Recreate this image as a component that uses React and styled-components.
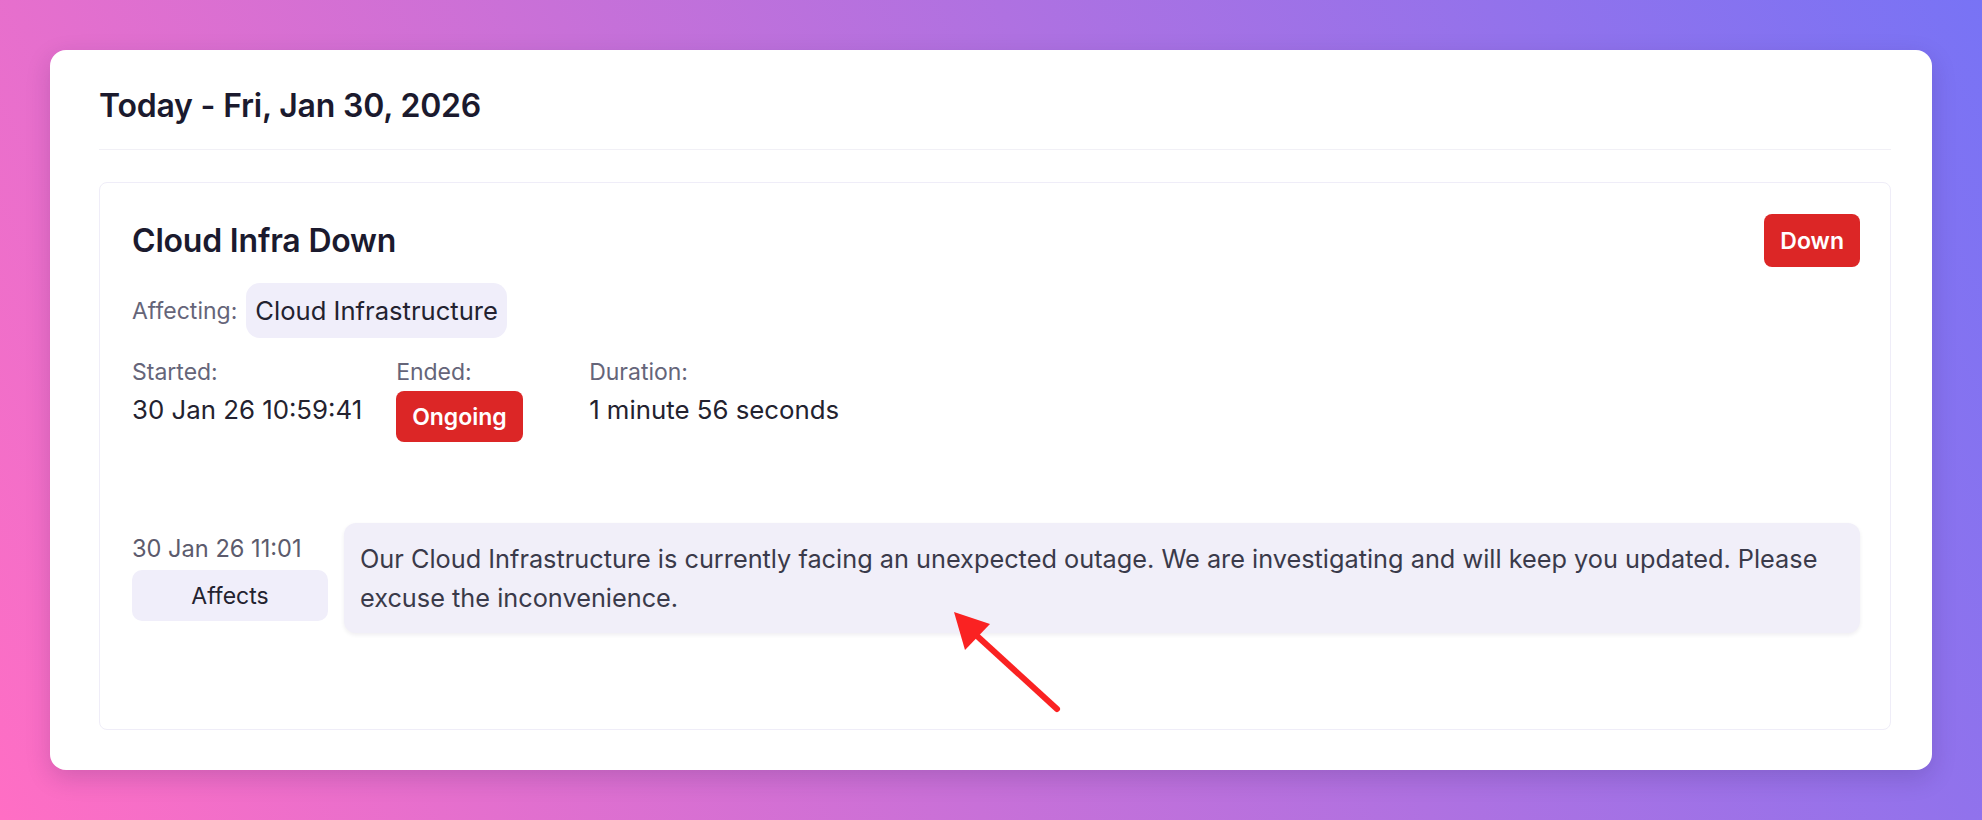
import React from "react";
import styled, { createGlobalStyle } from "styled-components";

const GlobalStyle = createGlobalStyle`
  html, body {
    margin: 0;
    padding: 0;
    overflow: hidden;
  }
  body {
    font-family: Inter, "Noto Sans", "Liberation Sans", sans-serif;
    -webkit-font-smoothing: antialiased;
  }
  * { box-sizing: border-box; }
`;

const Page = styled.div`
  position: relative;
  width: 1982px;
  height: 820px;
  padding: 50px;
  display: flex;
  flex-direction: column;
  background: linear-gradient(62deg, #ff6ec4 0%, #7873f5 100%);
`;

const Panel = styled.section`
  flex: 1;
  background: #ffffff;
  border-radius: 16px;
  padding: 36px 41px 39px 49px;
  box-shadow: 0 8px 24px rgba(40, 20, 80, 0.18);
`;

const DayTitle = styled.h2`
  margin: 0 0 32px;
  padding-bottom: 24px;
  border-bottom: 1px solid #f1f0f6;
  font-size: 32px;
  line-height: 39px;
  font-weight: 600;
  color: #1b1a2e;
  letter-spacing: -0.2px;
`;

const IncidentCard = styled.article`
  border: 1px solid #efedf8;
  border-radius: 8px;
  padding: 31px 30px 96px 32px;
`;

const Header = styled.div`
  display: flex;
  align-items: center;
  justify-content: space-between;
`;

const IncidentTitle = styled.h3`
  margin: 0;
  font-size: 32px;
  line-height: 39px;
  font-weight: 600;
  color: #1b1a2e;
  letter-spacing: -0.2px;
`;

const StatusBadge = styled.span`
  display: inline-flex;
  align-items: center;
  justify-content: center;
  align-self: ${(p) => (p.$inline ? "flex-start" : "auto")};
  height: ${(p) => p.$height}px;
  padding: 0 16px;
  border-radius: 8px;
  background: #dc2626;
  color: #ffffff;
  font-size: 23px;
  font-weight: 600;
`;

const AffectingRow = styled.div`
  margin-top: 16px;
  display: flex;
  align-items: center;
  gap: 9px;
`;

const Label = styled.span`
  font-size: 23px;
  line-height: 28px;
  color: #656579;
`;

const ComponentPill = styled.span`
  display: inline-flex;
  align-items: center;
  height: 55px;
  padding: 0 9px;
  border-radius: 14px;
  background: #f0eefa;
  color: #23222f;
  font-size: 25.6px;
`;

const Times = styled.div`
  margin-top: 20px;
  display: flex;
  gap: 34px;
`;

const TimeCol = styled.div`
  display: flex;
  flex-direction: column;
  gap: 5px;
  min-width: ${(p) => p.$minWidth || 0}px;
`;

const Value = styled.span`
  font-size: 25.8px;
  line-height: 37px;
  color: #23222f;
`;

const UpdateRow = styled.div`
  margin-top: 81px;
  display: flex;
  align-items: center;
  gap: 16px;
`;

const UpdateMeta = styled.div`
  width: 196px;
  flex: none;
  display: flex;
  flex-direction: column;
  gap: 7px;
`;

const UpdateDate = styled.span`
  font-size: 23.6px;
  line-height: 28px;
  color: #5c5b6d;
`;

const UpdateTag = styled.span`
  display: flex;
  align-items: center;
  justify-content: center;
  height: 51px;
  border-radius: 10px;
  background: #f0eefa;
  color: #23222f;
  font-size: 23px;
`;

const UpdateMessage = styled.p`
  flex: 1;
  margin: 0;
  padding: 16px;
  border-radius: 12px;
  background: #f1eff9;
  box-shadow: 0 2px 4px rgba(30, 20, 60, 0.07);
  font-size: 25.3px;
  line-height: 39px;
  color: #3a3a4a;
`;

const ArrowLayer = styled.svg`
  position: absolute;
  left: 0;
  top: 0;
  pointer-events: none;
`;

export default function App() {
  return (
    <>
      <GlobalStyle />
      <Page>
        <Panel>
          <DayTitle>Today - Fri, Jan 30, 2026</DayTitle>
          <IncidentCard>
            <Header>
              <IncidentTitle>Cloud Infra Down</IncidentTitle>
              <StatusBadge $height={53}>Down</StatusBadge>
            </Header>
            <AffectingRow>
              <Label>Affecting:</Label>
              <ComponentPill>Cloud Infrastructure</ComponentPill>
            </AffectingRow>
            <Times>
              <TimeCol>
                <Label>Started:</Label>
                <Value>30 Jan 26 10:59:41</Value>
              </TimeCol>
              <TimeCol $minWidth={159}>
                <Label>Ended:</Label>
                <StatusBadge $height={51} $inline>
                  Ongoing
                </StatusBadge>
              </TimeCol>
              <TimeCol>
                <Label>Duration:</Label>
                <Value>1 minute 56 seconds</Value>
              </TimeCol>
            </Times>
            <UpdateRow>
              <UpdateMeta>
                <UpdateDate>30 Jan 26 11:01</UpdateDate>
                <UpdateTag>Affects</UpdateTag>
              </UpdateMeta>
              <UpdateMessage>
                Our Cloud Infrastructure is currently facing an unexpected
                outage. We are investigating and will keep you updated. Please
                excuse the inconvenience.
              </UpdateMessage>
            </UpdateRow>
          </IncidentCard>
        </Panel>
        <ArrowLayer width="1982" height="820" viewBox="0 0 1982 820">
          <line
            x1="1057"
            y1="709"
            x2="976"
            y2="635"
            stroke="#fa2222"
            strokeWidth="6"
            strokeLinecap="round"
          />
          <polygon points="954,612 990,624 965,650" fill="#fa2222" />
        </ArrowLayer>
      </Page>
    </>
  );
}
